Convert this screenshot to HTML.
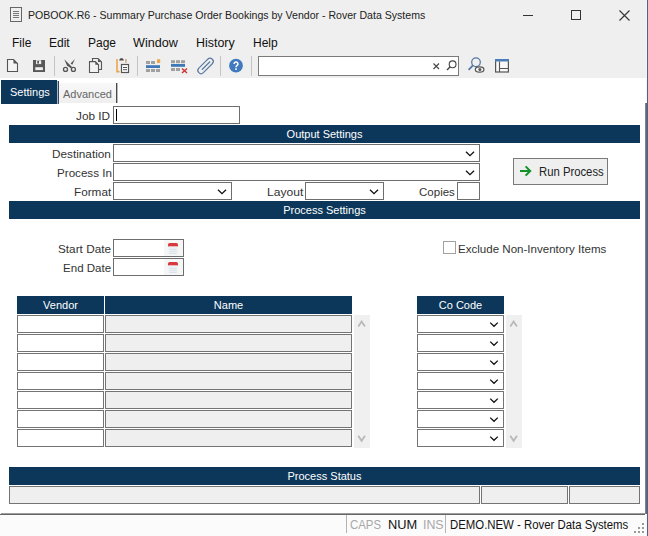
<!DOCTYPE html>
<html><head><meta charset="utf-8">
<style>
*{margin:0;padding:0;box-sizing:border-box}
html,body{width:648px;height:536px;overflow:hidden;background:#fff;font-family:"Liberation Sans",sans-serif;position:relative}
.a{position:absolute}
.t{position:absolute;white-space:nowrap;line-height:1}
#title{left:0;top:0;width:648px;height:30px;background:#efefef}
#menu{left:0;top:30px;width:648px;height:22px;background:#efefef}
#tool{left:0;top:52px;width:648px;height:26px;background:#efefef}
.hdr{position:absolute;background:#0c375a;color:#fff;font-size:11px;text-align:center;height:18px;line-height:18px}
.inp{position:absolute;border:1px solid #6e6e6e;background:#fff;height:18px}
.lbl{position:absolute;font-size:11px;color:#333;white-space:nowrap;line-height:1;transform-origin:0 0}
.cell{position:absolute;border:1px solid #747474;background:#fff;height:18px}
.cellg{position:absolute;border:1px solid #747474;background:#efefef;height:18px}
.sep{position:absolute;width:1px;background:#c8c8c8}
</style></head><body>
<!-- title bar -->
<div id="title" class="a">
  <svg class="a" style="left:10px;top:7px" width="13" height="16" viewBox="0 0 13 16"><rect x="0.5" y="0.5" width="11" height="14" fill="none" stroke="#666" stroke-width="1"/><path d="M3 4.5h6M3 6.5h6M3 8.5h6M3 10.5h6" stroke="#777" stroke-width="1"/></svg>
  <div class="t" style="left:28px;top:10px;font-size:11.5px;color:#222;transform:scaleX(0.918);transform-origin:0 0">POBOOK.R6 - Summary Purchase Order Bookings by Vendor - Rover Data Systems</div>
  <div class="a" style="left:523px;top:15px;width:10px;height:1px;background:#333"></div>
  <div class="a" style="left:571px;top:10px;width:10px;height:10px;border:1px solid #333"></div>
  <svg class="a" style="left:619px;top:10px" width="11" height="11" viewBox="0 0 11 11"><path d="M0.5 0.5L10.5 10.5M10.5 0.5L0.5 10.5" stroke="#333" stroke-width="1.1"/></svg>
</div>
<!-- menu -->
<div id="menu" class="a">
  <div class="t" style="left:12px;top:7px;font-size:12px;color:#111">File</div>
  <div class="t" style="left:49px;top:7px;font-size:12px;color:#111">Edit</div>
  <div class="t" style="left:88px;top:7px;font-size:12px;color:#111">Page</div>
  <div class="t" style="left:132.5px;top:7px;font-size:12px;color:#111;transform:scaleX(1.05);transform-origin:0 0">Window</div>
  <div class="t" style="left:195.6px;top:7px;font-size:12px;color:#111;transform:scaleX(1.035);transform-origin:0 0">History</div>
  <div class="t" style="left:253px;top:7px;font-size:12px;color:#111">Help</div>
</div>
<!-- toolbar -->
<div id="tool" class="a"></div>
<svg class="a" style="left:0;top:52px" width="520" height="27" viewBox="0 52 520 27">
 <!-- new doc -->
 <path d="M7.5 59.5H13.5L17.5 63.5V71.5H7.5Z" fill="#f4f4f4" stroke="#555" stroke-width="1.1"/>
 <path d="M13.5 59.5V63.5H17.5Z" fill="#555"/>
 <!-- save -->
 <rect x="33" y="60" width="12" height="12" fill="#585858"/>
 <rect x="36" y="60.3" width="5.2" height="3.8" fill="#efefef"/>
 <rect x="37.2" y="61" width="1.8" height="2.6" fill="#585858"/>
 <rect x="35.3" y="67.2" width="7.6" height="2.9" fill="#efefef"/>
 <rect x="54" y="56" width="1" height="20" fill="#c4c4c4"/>
 <!-- scissors -->
 <path d="M64.2 59.2L72.3 67.3L70.8 68.2L67 65.6Z" fill="#555"/><path d="M74.9 59L72.3 64.8L70.6 63.6Z" fill="#555"/>
 <circle cx="65.5" cy="69.4" r="2" fill="none" stroke="#555" stroke-width="1.3"/>
 <circle cx="73.4" cy="69.4" r="2" fill="none" stroke="#555" stroke-width="1.3"/>
 <!-- copy -->
 <path d="M92.5 58.5H98L101.5 62V69.5H92.5Z" fill="#efefef" stroke="#555" stroke-width="1.1"/>
 <path d="M89.5 61.6H95.3L98.5 64.8V72.5H89.5Z" fill="#f2f2f2" stroke="#555" stroke-width="1.1"/>
 <path d="M95.3 61.6V64.8H98.5Z" fill="#555"/>
 <path d="M98 58.5V62H101.5Z" fill="#555"/>
 <!-- paste -->
 <path d="M117 59V71.6H119.5" fill="none" stroke="#eaa848" stroke-width="1.6"/>
 <path d="M125.9 59V62.8" fill="none" stroke="#d0a878" stroke-width="1.5"/>
 <path d="M119.2 60.6C119.4 58.8 120.4 58.2 121.5 58.2C122.6 58.2 123.6 58.8 123.8 60.6Z" fill="#4a4a4a"/>
 <rect x="121.5" y="64.5" width="7" height="8" fill="#fff" stroke="#555" stroke-width="1.2"/>
 <path d="M123 67.5H127M123 69.7H127" stroke="#555" stroke-width="1"/>
 <rect x="137" y="56" width="1" height="20" fill="#c4c4c4"/>
 <!-- insert row -->
 <rect x="146" y="61" width="4" height="3" fill="#a0a0a0"/>
 <rect x="151" y="61" width="4" height="3" fill="#a0a0a0"/>
 <rect x="157" y="59.2" width="3.2" height="3.8" fill="#f0a448"/>
 <rect x="146" y="65.2" width="14" height="2.8" fill="#3d78b8"/>
 <rect x="146" y="69" width="4" height="3" fill="#a0a0a0"/>
 <rect x="151" y="69" width="4" height="3" fill="#a0a0a0"/>
 <rect x="156" y="69" width="4" height="3" fill="#a0a0a0"/>
 <!-- delete row -->
 <rect x="171" y="60.2" width="4" height="3" fill="#a0a0a0"/>
 <rect x="176" y="60.2" width="4" height="3" fill="#a0a0a0"/>
 <rect x="181" y="60.2" width="4" height="3" fill="#a0a0a0"/>
 <rect x="171" y="64" width="14" height="2.8" fill="#3d78b8"/>
 <rect x="171" y="68" width="4" height="3" fill="#a0a0a0"/>
 <rect x="176" y="68" width="4" height="3" fill="#a0a0a0"/>
 <path d="M182 68.5L187 73M187 68.5L182 73" stroke="#cc3535" stroke-width="1.5"/>
 <!-- paperclip -->
 <g transform="rotate(45 205.5 66)">
  <path d="M205.6 59.5V71.2M202.3 62V72.2A3.2 3.2 0 0 0 208.7 72.2V59.6A3.2 3.2 0 0 0 202.3 59.6V62" fill="none" stroke="#5a7aa2" stroke-width="1.2"/>
 </g>
 <rect x="220" y="56" width="1" height="20" fill="#c4c4c4"/>
 <!-- help -->
 <circle cx="236" cy="65.7" r="6.9" fill="#4079be"/>
 <path d="M234.1 64A1.95 1.85 0 1 1 237 65.5C236.3 66 236 66.3 236 67.3" fill="none" stroke="#fff" stroke-width="1.5"/>
 <rect x="235.2" y="68.3" width="1.6" height="1.6" fill="#fff"/>
 <rect x="251" y="56" width="1" height="20" fill="#c4c4c4"/>
 <!-- search box -->
 <rect x="258.5" y="56.5" width="200" height="19" fill="#fff" stroke="#7a7a7a" stroke-width="1"/>
 <path d="M433.5 63.5L439 69M439 63.5L433.5 69" stroke="#444" stroke-width="1.1"/>
 <circle cx="452.6" cy="64.3" r="3.4" fill="none" stroke="#444" stroke-width="1.1"/>
 <path d="M450.2 66.8L447 70" stroke="#444" stroke-width="1.4"/>
 <!-- search eye -->
 <circle cx="476" cy="62.2" r="4.3" fill="none" stroke="#5676a0" stroke-width="1.25"/>
 <path d="M472.9 65.3L468.6 69.8" stroke="#5676a0" stroke-width="1.7"/>
 <ellipse cx="479.6" cy="69.5" rx="4.3" ry="2.7" fill="#f6f6f6" stroke="#555" stroke-width="1.2"/>
 <circle cx="479.9" cy="69.5" r="1.5" fill="#555"/>
 <!-- layout -->
 <rect x="495.6" y="59.6" width="12.8" height="12.4" fill="#f8f8f8" stroke="#555" stroke-width="1.2"/>
 <rect x="495" y="59" width="14" height="2.5" fill="#4a7cb8"/>
 <path d="M499.5 61.5V72M499.5 68.5H508.5" stroke="#555" stroke-width="1.1"/>
</svg>
<div class="a" style="left:0;top:79px;width:648px;height:1px;background:#fff"></div>

<!-- tabs -->
<div class="a" style="left:1px;top:80px;width:56px;height:24px;background:#0c375a"></div>
<div class="a" style="left:57px;top:81px;width:1px;height:23px;background:#9fb6cc"></div>
<div class="a" style="left:58px;top:81px;width:1px;height:23px;background:#3a4656"></div>
<div class="t" style="left:10px;top:87px;font-size:11px;color:#fff">Settings</div>
<div class="a" style="left:59px;top:83px;width:57px;height:20px;background:linear-gradient(#f8f8f8,#efefef)"></div>
<div class="a" style="left:116px;top:83px;width:1px;height:20px;background:#4a4a4a"></div><div class="a" style="left:117px;top:83px;width:1px;height:20px;background:#b8b8b8"></div>
<div class="t" style="left:63px;top:89px;font-size:11px;color:#666">Advanced</div>

<!-- right edge -->
<div class="a" style="left:646px;top:0;width:1px;height:103px;background:#f2f6fd"></div>
<div class="a" style="left:645px;top:103px;width:1px;height:411px;background:#7a8296"></div>
<div class="a" style="left:646px;top:103px;width:1px;height:411px;background:#5d6880"></div>

<!-- Job ID -->
<div class="lbl" style="left:76.4px;top:111px;transform:scaleX(1.07)">Job ID</div>
<div class="inp" style="left:113px;top:106px;width:127px"></div>
<div class="a" style="left:116px;top:109px;width:1px;height:12px;background:#000"></div>

<div class="hdr" style="left:9px;top:125px;width:631px">Output Settings</div>
<div class="lbl" style="left:51.8px;top:149px;transform:scaleX(1.07)">Destination</div>
<div class="inp" style="left:113px;top:144px;width:367px"></div>
<div class="lbl" style="left:56.8px;top:168px;transform:scaleX(1.057)">Process In</div>
<div class="inp" style="left:113px;top:163px;width:367px"></div>
<div class="lbl" style="left:73.9px;top:187px;transform:scaleX(1.067)">Format</div>
<div class="inp" style="left:113px;top:182px;width:119px"></div>
<div class="lbl" style="left:266.6px;top:187px;transform:scaleX(1.097)">Layout</div>
<div class="inp" style="left:305px;top:182px;width:79px"></div>
<div class="lbl" style="left:418.9px;top:187px;transform:scaleX(1.047)">Copies</div>
<div class="inp" style="left:457px;top:182px;width:23px"></div>

<svg class="a" style="left:465px;top:151px" width="10" height="6" viewBox="0 0 10 6"><path d="M1 0.8L5 4.6L9 0.8" fill="none" stroke="#111" stroke-width="1.3"/></svg>
<svg class="a" style="left:465px;top:170px" width="10" height="6" viewBox="0 0 10 6"><path d="M1 0.8L5 4.6L9 0.8" fill="none" stroke="#111" stroke-width="1.3"/></svg>
<svg class="a" style="left:217px;top:189px" width="10" height="6" viewBox="0 0 10 6"><path d="M1 0.8L5 4.6L9 0.8" fill="none" stroke="#111" stroke-width="1.3"/></svg>
<svg class="a" style="left:369px;top:189px" width="10" height="6" viewBox="0 0 10 6"><path d="M1 0.8L5 4.6L9 0.8" fill="none" stroke="#111" stroke-width="1.3"/></svg>
<div class="a" style="left:513px;top:158px;width:95px;height:27px;border:1px solid #7a7a7a;background:#efefef"></div>
<svg class="a" style="left:516px;top:162px" width="20" height="18" viewBox="516 162 20 18"><path d="M520 171H530.3M525.6 166.4L530.2 171L525.6 175.6" fill="none" stroke="#13922a" stroke-width="2"/></svg>
<div class="t" style="left:539px;top:166px;font-size:12px;color:#222;transform:scaleX(0.942);transform-origin:0 0">Run Process</div>

<div class="hdr" style="left:9px;top:201px;width:631px">Process Settings</div>

<div class="lbl" style="left:57.7px;top:244px;transform:scaleX(1.07)">Start Date</div>
<div class="inp" style="left:113px;top:239px;width:71px"></div>
<div class="a" style="left:164px;top:240px;width:19px;height:16px;background:#f6f6f6"></div>
<svg class="a" style="left:167px;top:242px" width="12" height="13" viewBox="0 0 12 13"><path d="M1 4.6V2.6Q1 1 2.6 1H9.4Q11 1 11 2.6V4.6Z" fill="#d8393c"/><rect x="1.5" y="4.6" width="9" height="7.6" fill="#eceff3"/><path d="M2.5 7.5H9.5M2.5 9.5H9.5M2.5 11.5H9.5" stroke="#dce2ea" stroke-width="1"/></svg>
<div class="lbl" style="left:63.2px;top:263px;transform:scaleX(1.05)">End Date</div>
<div class="inp" style="left:113px;top:258px;width:71px"></div>
<div class="a" style="left:164px;top:259px;width:19px;height:16px;background:#f6f6f6"></div>
<svg class="a" style="left:167px;top:261px" width="12" height="13" viewBox="0 0 12 13"><path d="M1 4.6V2.6Q1 1 2.6 1H9.4Q11 1 11 2.6V4.6Z" fill="#d8393c"/><rect x="1.5" y="4.6" width="9" height="7.6" fill="#eceff3"/><path d="M2.5 7.5H9.5M2.5 9.5H9.5M2.5 11.5H9.5" stroke="#dce2ea" stroke-width="1"/></svg>

<div class="a" style="left:443px;top:241px;width:13px;height:13px;border:1px solid #a2a2a2;background:#fff"></div>
<div class="lbl" style="left:457.7px;top:244px;transform:scaleX(1.05)">Exclude Non-Inventory Items</div>

<!-- tables -->
<div class="hdr" style="left:17px;top:296px;width:87px">Vendor</div>
<div class="hdr" style="left:105px;top:296px;width:247px">Name</div>
<div class="a" style="left:354px;top:315px;width:16px;height:133px;background:#f0f0f0"></div>
<div class="hdr" style="left:417px;top:296px;width:87px">Co Code</div>
<div class="a" style="left:506px;top:315px;width:16px;height:133px;background:#f0f0f0"></div>
<div class="cell" style="left:17px;top:315px;width:87px"></div>
<div class="cellg" style="left:105px;top:315px;width:247px"></div>
<div class="cell" style="left:417px;top:315px;width:87px"></div>
<svg class="a" style="left:489px;top:322px" width="10" height="6" viewBox="0 0 10 6"><path d="M1.2 0.6L5 4.3L8.8 0.6" fill="none" stroke="#111" stroke-width="1.3"/></svg>
<div class="cell" style="left:17px;top:334px;width:87px"></div>
<div class="cellg" style="left:105px;top:334px;width:247px"></div>
<div class="cell" style="left:417px;top:334px;width:87px"></div>
<svg class="a" style="left:489px;top:341px" width="10" height="6" viewBox="0 0 10 6"><path d="M1.2 0.6L5 4.3L8.8 0.6" fill="none" stroke="#111" stroke-width="1.3"/></svg>
<div class="cell" style="left:17px;top:353px;width:87px"></div>
<div class="cellg" style="left:105px;top:353px;width:247px"></div>
<div class="cell" style="left:417px;top:353px;width:87px"></div>
<svg class="a" style="left:489px;top:360px" width="10" height="6" viewBox="0 0 10 6"><path d="M1.2 0.6L5 4.3L8.8 0.6" fill="none" stroke="#111" stroke-width="1.3"/></svg>
<div class="cell" style="left:17px;top:372px;width:87px"></div>
<div class="cellg" style="left:105px;top:372px;width:247px"></div>
<div class="cell" style="left:417px;top:372px;width:87px"></div>
<svg class="a" style="left:489px;top:379px" width="10" height="6" viewBox="0 0 10 6"><path d="M1.2 0.6L5 4.3L8.8 0.6" fill="none" stroke="#111" stroke-width="1.3"/></svg>
<div class="cell" style="left:17px;top:391px;width:87px"></div>
<div class="cellg" style="left:105px;top:391px;width:247px"></div>
<div class="cell" style="left:417px;top:391px;width:87px"></div>
<svg class="a" style="left:489px;top:398px" width="10" height="6" viewBox="0 0 10 6"><path d="M1.2 0.6L5 4.3L8.8 0.6" fill="none" stroke="#111" stroke-width="1.3"/></svg>
<div class="cell" style="left:17px;top:410px;width:87px"></div>
<div class="cellg" style="left:105px;top:410px;width:247px"></div>
<div class="cell" style="left:417px;top:410px;width:87px"></div>
<svg class="a" style="left:489px;top:417px" width="10" height="6" viewBox="0 0 10 6"><path d="M1.2 0.6L5 4.3L8.8 0.6" fill="none" stroke="#111" stroke-width="1.3"/></svg>
<div class="cell" style="left:17px;top:429px;width:87px"></div>
<div class="cellg" style="left:105px;top:429px;width:247px"></div>
<div class="cell" style="left:417px;top:429px;width:87px"></div>
<svg class="a" style="left:489px;top:436px" width="10" height="6" viewBox="0 0 10 6"><path d="M1.2 0.6L5 4.3L8.8 0.6" fill="none" stroke="#111" stroke-width="1.3"/></svg>

<svg class="a" style="left:357px;top:320px" width="10" height="9" viewBox="0 0 10 9"><path d="M1.3 6.6 L4.6 1.6 L8 6.6" fill="none" stroke="#b8b8b8" stroke-width="1.8"/></svg><svg class="a" style="left:509px;top:320px" width="10" height="9" viewBox="0 0 10 9"><path d="M1.3 6.6 L4.6 1.6 L8 6.6" fill="none" stroke="#b8b8b8" stroke-width="1.8"/></svg>
<svg class="a" style="left:357px;top:434px" width="10" height="9" viewBox="0 0 10 9"><path d="M1.3 1.8 L4.6 6.8 L8 1.8" fill="none" stroke="#b8b8b8" stroke-width="1.8"/></svg><svg class="a" style="left:509px;top:434px" width="10" height="9" viewBox="0 0 10 9"><path d="M1.3 1.8 L4.6 6.8 L8 1.8" fill="none" stroke="#b8b8b8" stroke-width="1.8"/></svg>
<div class="hdr" style="left:9px;top:467px;width:631px">Process Status</div>
<div class="cellg" style="left:9px;top:486px;width:471px"></div>
<div class="cellg" style="left:481px;top:486px;width:87px"></div>
<div class="cellg" style="left:569px;top:486px;width:71px"></div>

<!-- bottom line + status bar -->
<div class="a" style="left:1px;top:513px;width:644px;height:1px;background:#9c9c9c"></div><div class="a" style="left:0;top:514px;width:645px;height:1px;background:#666"></div>
<div class="a" style="left:0;top:515px;width:648px;height:21px;background:#fbfbfb"></div>
<div class="a" style="left:346px;top:515px;width:1px;height:18px;background:#b4b4b4"></div>
<div class="a" style="left:445px;top:515px;width:1px;height:18px;background:#b4b4b4"></div>
<div class="t" style="left:349.5px;top:519px;font-size:12px;color:#a8a8a8;transform:scaleX(0.95);transform-origin:0 0">CAPS</div>
<div class="t" style="left:388px;top:519px;font-size:12px;color:#111;transform:scaleX(1.068);transform-origin:0 0">NUM</div>
<div class="t" style="left:423px;top:519px;font-size:12px;color:#a8a8a8;transform:scaleX(1.03);transform-origin:0 0">INS</div>
<div class="t" style="left:450px;top:519px;font-size:12px;color:#111;transform:scaleX(0.948);transform-origin:0 0">DEMO.NEW - Rover Data Systems</div>
<div class="a" style="left:642px;top:523px;width:2px;height:2px;background:#9a9a9a"></div><div class="a" style="left:638px;top:527px;width:2px;height:2px;background:#9a9a9a"></div><div class="a" style="left:642px;top:527px;width:2px;height:2px;background:#9a9a9a"></div><div class="a" style="left:634px;top:531px;width:2px;height:2px;background:#9a9a9a"></div><div class="a" style="left:638px;top:531px;width:2px;height:2px;background:#9a9a9a"></div><div class="a" style="left:642px;top:531px;width:2px;height:2px;background:#9a9a9a"></div><div class="a" style="left:646px;top:515px;width:1px;height:21px;background:#f2f6fd"></div>
<div class="a" style="left:647px;top:0;width:1px;height:536px;background:#56617b"></div>
</body></html>
